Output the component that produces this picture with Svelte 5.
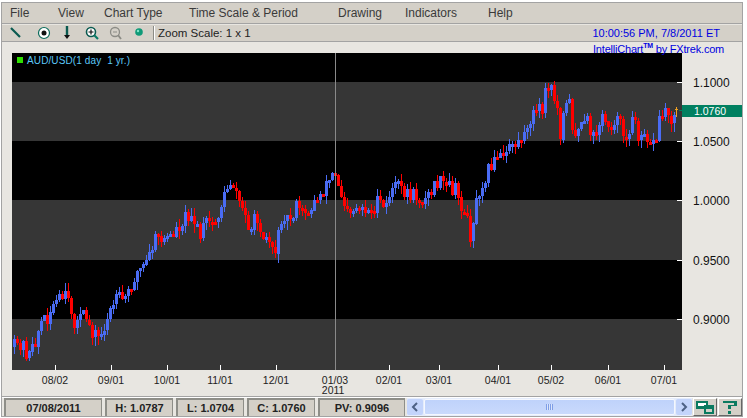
<script>
  const menu = [
    { label: 'File', w: 48 },
    { label: 'View', w: 46 },
    { label: 'Chart Type', w: 85 },
    { label: 'Time Scale & Period', w: 149 },
    { label: 'Drawing', w: 67 },
    { label: 'Indicators', w: 83 },
    { label: 'Help', w: 40 }
  ];

  // approximate close price path, in chart pixels
  const path = [
    [14,347],[18,347],[21,340],[28,357],[32,350],[36,338],[40,322],[46,318],[55,303],[65,298],[72,313],[75,323],
    [85,315],[90,327],[97,337],[100,338],[105,323],[112,307],[117,300],[123,300],[128,293],[132,280],[137,273],
    [145,265],[155,240],[170,237],[190,210],[200,238],[205,223],[215,223],[223,200],[228,183],[233,183],[238,197],
    [243,213],[250,227],[257,217],[263,233],[270,243],[276,250],[282,210],[288,220],[297,207],[302,213],[312,207],
    [318,197],[327,183],[333,173],[338,183],[342,197],[350,210],[355,207],[363,207],[370,213],[378,203],[385,210],
    [390,190],[397,185],[410,195],[425,200],[437,183],[455,190],[465,215],[470,235],[478,190],[490,165],[500,157],
    [505,160],[510,140],[515,145],[520,138],[527,135],[530,117],[535,112],[542,110],[545,93],[550,87],[555,100],
    [558,113],[560,132],[563,107],[570,103],[570,118],[575,133],[582,127],[588,122],[592,140],[598,125],[603,117],
    [610,127],[615,117],[620,127],[625,137],[632,120],[637,133],[643,128],[650,140],[655,147],[658,122],[665,108],
    [670,118],[675,110]
  ];

  let seed = 42;
  function rnd() {
    seed = (seed * 16807) % 2147483647;
    return seed / 2147483647;
  }

  function priceAt(x) {
    for (let i = 1; i < path.length; i++) {
      if (x <= path[i][0]) {
        const [x0, y0] = path[i - 1];
        const [x1, y1] = path[i];
        if (x1 === x0) return y1;
        return y0 + ((y1 - y0) * (x - x0)) / (x1 - x0);
      }
    }
    return path[path.length - 1][1];
  }

  const candles = [];
  let prev = 347;
  for (let x = 14; x < 675; x += 3) {
    const close = priceAt(x) + (rnd() - 0.5) * 16;
    const top = Math.min(prev, close);
    const bottom = Math.max(prev, close);
    candles.push({
      x,
      top: Math.round(top),
      h: Math.max(3, Math.round(bottom - top)),
      wickTop: Math.round(top - rnd() * 8),
      wickBottom: Math.round(bottom + rnd() * 9),
      up: close < prev
    });
    prev = close;
  }

  const bands = [[82, 59], [200, 60], [319, 51]];
  const ticks = [55, 111, 167, 220, 276, 389, 439, 498, 551, 608, 664];
  const priceTicks = [82, 141, 200, 260, 319];

  const prices = [
    { y: 82, t: '1.1000' },
    { y: 141, t: '1.0500' },
    { y: 200, t: '1.0000' },
    { y: 260, t: '0.9500' },
    { y: 319, t: '0.9000' }
  ];

  const dates = [
    { x: 55, t: '08/02' },
    { x: 111, t: '09/01' },
    { x: 167, t: '10/01' },
    { x: 220, t: '11/01' },
    { x: 276, t: '12/01' },
    { x: 335, t: '01/03', sub: '2011' },
    { x: 389, t: '02/01' },
    { x: 439, t: '03/01' },
    { x: 498, t: '04/01' },
    { x: 551, t: '05/02' },
    { x: 608, t: '06/01' },
    { x: 664, t: '07/01' }
  ];

  const stats = [
    { t: '07/08/2011', w: 98 },
    { t: 'H: 1.0787', w: 68 },
    { t: 'L: 1.0704', w: 68 },
    { t: 'C: 1.0760', w: 68 },
    { t: 'PV: 0.9096', w: 87 }
  ];
</script>

<div class="window">
  <nav class="menu">
    {#each menu as m}
      <span style="width:{m.w}px">{m.label}</span>
    {/each}
  </nav>

  <div class="toolbar">
    <svg class="tools" width="146" height="16" viewBox="6 0 146 16">
      <path d="M11 3l9 9" stroke="#0a5a50" stroke-width="2.2" fill="none" />
      <circle cx="44" cy="8" r="5.5" fill="#fff" stroke="#0a6a5a" stroke-width="1.2" />
      <circle cx="44" cy="8" r="2.5" fill="#111" />
      <path d="M67 1v9" stroke="#0a5a50" stroke-width="2.4" />
      <path d="M64 10h6l-3 4z" fill="#111" />
      <circle cx="91" cy="7" r="4.5" fill="#fff" stroke="#0a5a50" stroke-width="1.6" />
      <path d="M88.5 7h5M91 4.5v5" stroke="#111" stroke-width="1.2" />
      <path d="M94 10l4 4" stroke="#0a7a66" stroke-width="2.2" />
      <circle cx="115" cy="7" r="4.5" fill="none" stroke="#8c8c86" stroke-width="1.3" />
      <path d="M113 7h4" stroke="#8c8c86" />
      <path d="M118 10l3 4" stroke="#8c8c86" stroke-width="1.8" />
      <circle cx="139" cy="7" r="3.8" fill="#0f9a78" />
      <circle cx="138" cy="6" r="1.2" fill="#7fe6c8" />
    </svg>
    <i class="sep"></i>
    <span class="zoom">Zoom Scale: 1 x 1</span>
    <span class="clock">10:00:56 PM, 7/8/2011 ET</span>
  </div>

  <div class="stage">
    <div class="brand">IntelliChart<sup>TM</sup> by FXtrek.com</div>

    <svg class="chart" width="670" height="317" viewBox="12 53 670 317" shape-rendering="crispEdges">
      <rect x="12" y="53" width="670" height="317" fill="#000" />
      {#each bands as b}
        <rect x="12" y={b[0]} width="670" height={b[1]} fill="#363636" />
      {/each}
      {#each candles as c}
        <rect x={c.x} y={c.wickTop} width="1" height={c.wickBottom - c.wickTop} fill={c.up ? '#4a6cf4' : '#f00'} />
        <rect x={c.x - 1} y={c.top} width="3" height={c.h} fill={c.up ? '#4a6cf4' : '#f00'} />
      {/each}
      <rect x="676" y="107" width="1" height="10" fill="#f0a020" />
      <rect x="675" y="109" width="3" height="1" fill="#f0a020" />
      <rect x="679" y="110" width="3" height="1" fill="#008060" />
      <rect x="335" y="53" width="1" height="317" fill="#8a8a8a" />
      {#each ticks as t}
        <rect x={t} y="365" width="1" height="5" fill="#fff" />
      {/each}
      {#each priceTicks as y}
        <rect x="677" {y} width="5" height="1" fill="#fff" />
      {/each}
      <rect x="17" y="57" width="6" height="6" fill="#2fe000" />
    </svg>
    <span class="legend">AUD/USD(1 day&nbsp; 1 yr.)</span>

    {#each prices as p}
      <span class="price" style="top:{p.y - 49}px">{p.t}</span>
    {/each}
    <span class="last">1.0760</span>

    {#each dates as d}
      <span class="date" style="left:{d.x - 2}px">{d.t}{#if d.sub}<br />{d.sub}{/if}</span>
    {/each}
  </div>

  <div class="status">
    {#each stats as s}
      <b style="width:{s.w}px">{s.t}</b>
    {/each}
    <div class="scroll">
      <span class="arrow">
        <svg width="8" height="10" viewBox="0 0 8 10"><path d="M6 1L2 5l4 4" fill="none" stroke="#4d6185" stroke-width="2" /></svg>
      </span>
      <span class="thumb"><i></i></span>
      <span class="arrow">
        <svg width="8" height="10" viewBox="0 0 8 10"><path d="M2 1l4 4-4 4" fill="none" stroke="#4d6185" stroke-width="2" /></svg>
      </span>
    </div>
    <span class="btn">
      <svg width="18" height="13" viewBox="0 0 18 13" shape-rendering="crispEdges">
        <rect x="0" y="0" width="12" height="8" fill="#0a7a60" />
        <rect x="2" y="2" width="8" height="3" fill="#fff" />
        <rect x="8" y="4" width="10" height="9" fill="#0a7a60" />
        <rect x="10" y="8" width="6" height="3" fill="#d4d0c8" />
      </svg>
    </span>
    <span class="btn">
      <svg width="16" height="13" viewBox="0 0 16 13" shape-rendering="crispEdges">
        <path d="M1 0h14v5H9v3H6V4h6V2H1zM6 10h3v3H6z" fill="#0a7a60" />
      </svg>
    </span>
  </div>
</div>

<style>
  :global(body) {
    background: #fff;
  }
  .window {
    box-sizing: border-box;
    width: 742px;
    height: 415px;
    margin: 2px 0 0 1px;
    border: 1px solid #a3a3a3;
    background: #e8e6e1;
    display: flex;
    flex-direction: column;
    font-family: 'Liberation Sans', Arial, sans-serif;
    color: #222;
  }
  .menu {
    height: 20px;
    padding-left: 8px;
    display: flex;
    align-items: center;
    background: #d4d0c8;
    border-bottom: 1px solid #a3a3a3;
    font-size: 12px;
    color: #3a3a3a;
    flex: none;
  }
  .menu span {
    flex: none;
  }
  .toolbar {
    height: 16px;
    margin-top: 1px;
    display: flex;
    align-items: center;
    background: #d4d0c8;
    border-bottom: 1px solid #a3a3a3;
    flex: none;
  }
  .tools {
    flex: none;
    margin-left: 4px;
  }
  .sep {
    width: 1px;
    height: 14px;
    margin-left: 1px;
    background: #8c8c86;
    border-right: 1px solid #fff;
  }
  .zoom {
    margin-left: 3px;
    font-size: 11.5px;
  }
  .clock {
    margin-left: auto;
    margin-right: 22px;
    font-size: 11px;
    color: #0000e0;
  }
  .stage {
    position: relative;
    flex: 1;
    margin-top: 1px;
    border-bottom: 1px solid #a3a3a3;
    box-shadow: 0 1px 0 #fff;
    overflow: hidden;
  }
  .brand {
    position: absolute;
    left: 591px;
    top: 0;
    font-size: 11px;
    letter-spacing: -0.2px;
    line-height: 13px;
    color: #0000e0;
    white-space: nowrap;
    z-index: 1;
  }
  .brand sup {
    font-size: 7px;
    font-weight: bold;
    line-height: 0;
  }
  .chart {
    position: absolute;
    left: 10px;
    top: 10px;
    display: block;
  }
  .legend {
    position: absolute;
    left: 25px;
    top: 12px;
    font-size: 10px;
    letter-spacing: 0.12px;
    line-height: 12px;
    color: #5cc8f8;
    white-space: pre;
  }
  .price {
    position: absolute;
    left: 691px;
    font-size: 12px;
    line-height: 14px;
    color: #111;
  }
  .last {
    position: absolute;
    left: 680px;
    top: 62px;
    width: 60px;
    height: 12px;
    padding-left: 12px;
    box-sizing: border-box;
    background: #008060;
    color: #fff;
    font-size: 10.5px;
    line-height: 12px;
  }
  .date {
    position: absolute;
    top: 332px;
    transform: translateX(-50%);
    font-size: 10.5px;
    line-height: 10px;
    color: #222;
    text-align: left;
  }
  .status {
    height: 19px;
    padding-top: 1px;
    display: flex;
    align-items: stretch;
    gap: 3px;
    padding-left: 2px;
    flex: none;
    box-sizing: border-box;
  }
  .status b {
    box-sizing: border-box;
    flex: none;
    background: #d4d0c8;
    border: 2px solid #8e8e88;
    border-width: 2px 1px 0 2px;
    text-align: center;
    font-size: 11px;
    line-height: 16px;
    color: #222;
  }
  .scroll {
    flex: none;
    width: 285px;
    display: flex;
    gap: 1px;
    margin-left: -1px;
    padding: 1px 0;
    background: #e4ecfb;
  }
  .arrow {
    width: 16px;
    display: flex;
    align-items: center;
    justify-content: center;
    background: #c3d4fb;
    border-radius: 2px;
    flex: none;
  }
  .thumb {
    flex: 1;
    display: flex;
    align-items: center;
    justify-content: center;
    background: linear-gradient(#bfd2fb, #c9d9fc);
    border-radius: 2px;
    border: 1px solid #f4f7fe;
  }
  .thumb i {
    width: 7px;
    height: 6px;
    background: repeating-linear-gradient(90deg, #7f9ee6 0 1px, #dbe5fb 1px 2px);
  }
  .btn {
    box-sizing: border-box;
    flex: none;
    width: 24px;
    margin-left: -2px;
    display: flex;
    align-items: center;
    justify-content: center;
    background: #d4d0c8;
    border: 1px solid;
    border-color: #fff #666 #666 #fff;
  }
</style>
